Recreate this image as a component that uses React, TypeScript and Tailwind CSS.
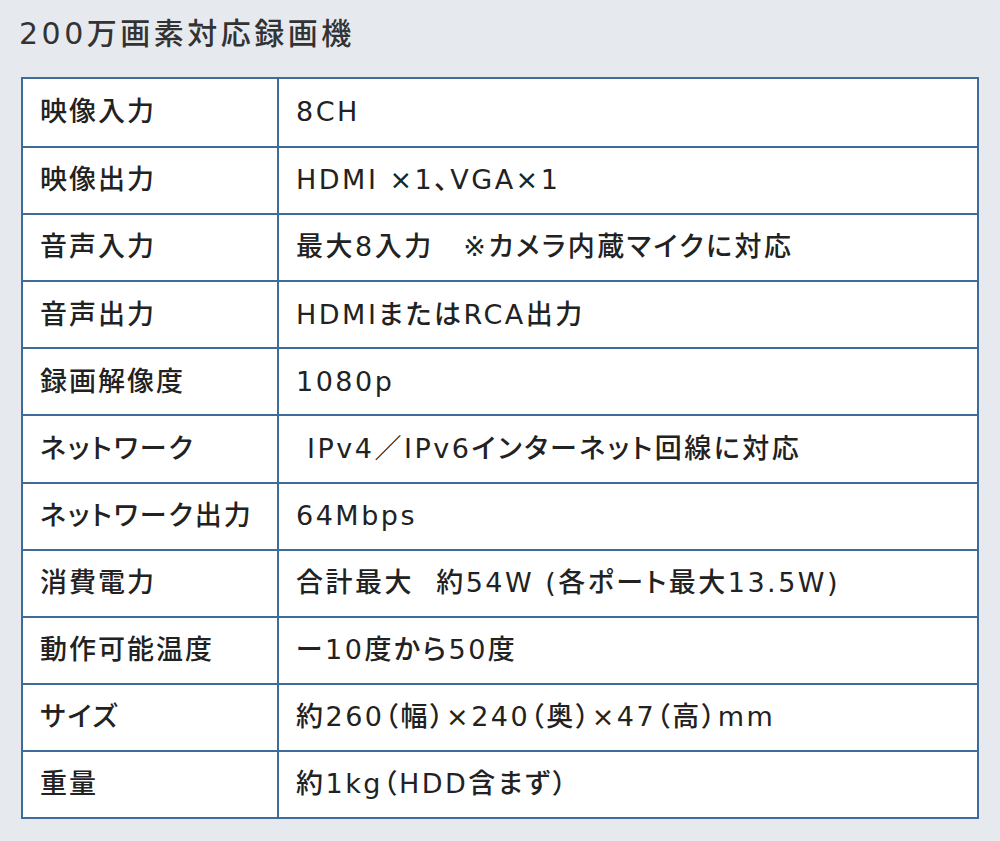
import React from 'react';

const specs: [string, string][] = [
  ['映像入力', '8CH'],
  ['映像出力', 'HDMI ×1、VGA×1'],
  ['音声入力', '最大8入力　※カメラ内蔵マイクに対応'],
  ['音声出力', 'HDMIまたはRCA出力'],
  ['録画解像度', '1080p'],
  ['ネットワーク', ' IPv4／IPv6インターネット回線に対応'],
  ['ネットワーク出力', '64Mbps'],
  ['消費電力', '合計最大  約54W (各ポート最大13.5W)'],
  ['動作可能温度', 'ー10度から50度'],
  ['サイズ', '約260（幅）×240（奥）×47（高）mm'],
  ['重量', '約1kg（HDD含まず）'],
];

const App: React.FC = () => {
  return (
    <div
      className="w-[1000px] h-[841px] bg-[#e6eaee] text-[#222222] overflow-hidden [font-feature-settings:'palt']"
      style={{ fontFamily: '"DejaVu Sans", "Noto Sans CJK JP", sans-serif' }}
    >
      {/* Title */}
      <h1 className="h-[77px] pl-[19px] pt-[13px] text-[30px] leading-[42px] tracking-[3.5px] font-medium text-[#333333]">
        200万画素対応録画機
      </h1>

      {/* Spec table */}
      <div className="ml-[21px] w-[958px] border-2 border-[#3f6b9b] bg-white">
        {specs.map(([label, value], i) => (
          <div
            key={label}
            className={`grid grid-cols-[256px_1fr] h-[67.1px] ${i > 0 ? 'border-t-2 border-[#3f6b9b]' : ''}`}
          >
            <div className="flex items-center pl-[17px] text-[27px] tracking-[2px] font-medium border-r-2 border-[#3f6b9b]">
              {label}
            </div>
            <div className="flex items-center pl-[17px] text-[27px] tracking-[2.5px] font-medium whitespace-pre">
              {value}
            </div>
          </div>
        ))}
      </div>
    </div>
  );
};

export default App;
